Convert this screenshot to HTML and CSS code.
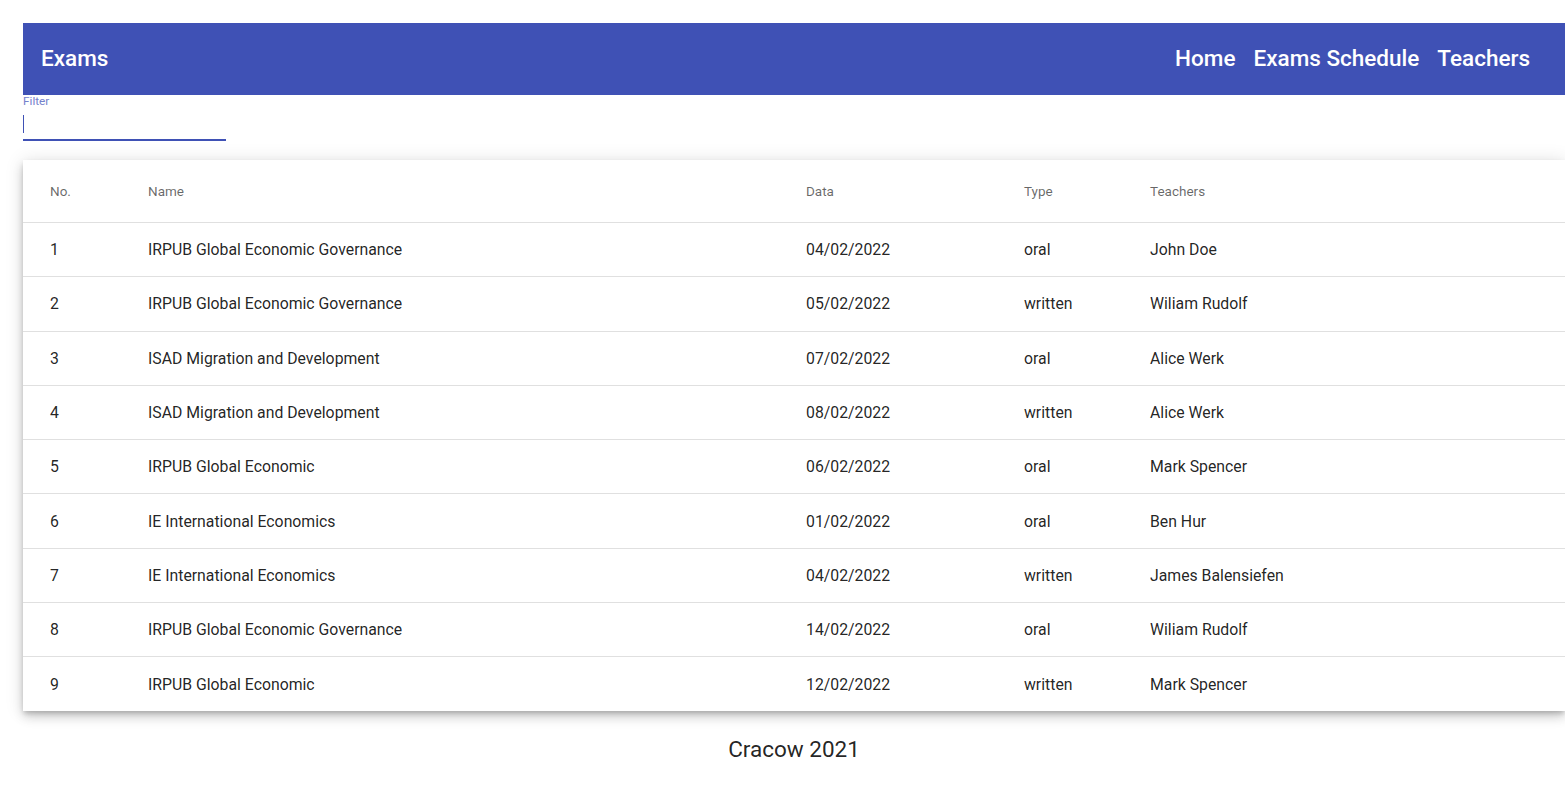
FILE: index.html
```html
<!DOCTYPE html>
<html lang="en">
<head>
<meta charset="utf-8">
<title>Exams</title>
<link rel="stylesheet" href="styles.css">
</head>
<body>
<div class="page">
  <header class="toolbar">
    <span class="title">Exams</span>
    <nav class="nav">
      <a class="nav-link">Home</a>
      <a class="nav-link">Exams Schedule</a>
      <a class="nav-link">Teachers</a>
    </nav>
  </header>
  <div class="filter">
    <label class="filter-label">Filter</label>
    <div class="filter-input"><span class="caret"></span></div>
  </div>
  <div class="card">
    <table class="table">
      <colgroup>
        <col class="c-no"><col class="c-name"><col class="c-data"><col class="c-type"><col class="c-teach">
      </colgroup>
      <thead>
        <tr><th>No.</th><th>Name</th><th>Data</th><th>Type</th><th>Teachers</th></tr>
      </thead>
      <tbody>
        <tr><td>1</td><td>IRPUB Global Economic Governance</td><td>04/02/2022</td><td>oral</td><td>John Doe</td></tr>
        <tr><td>2</td><td>IRPUB Global Economic Governance</td><td>05/02/2022</td><td>written</td><td>Wiliam Rudolf</td></tr>
        <tr><td>3</td><td>ISAD Migration and Development</td><td>07/02/2022</td><td>oral</td><td>Alice Werk</td></tr>
        <tr><td>4</td><td>ISAD Migration and Development</td><td>08/02/2022</td><td>written</td><td>Alice Werk</td></tr>
        <tr><td>5</td><td>IRPUB Global Economic</td><td>06/02/2022</td><td>oral</td><td>Mark Spencer</td></tr>
        <tr><td>6</td><td>IE International Economics</td><td>01/02/2022</td><td>oral</td><td>Ben Hur</td></tr>
        <tr><td>7</td><td>IE International Economics</td><td>04/02/2022</td><td>written</td><td>James Balensiefen</td></tr>
        <tr><td>8</td><td>IRPUB Global Economic Governance</td><td>14/02/2022</td><td>oral</td><td>Wiliam Rudolf</td></tr>
        <tr><td>9</td><td>IRPUB Global Economic</td><td>12/02/2022</td><td>written</td><td>Mark Spencer</td></tr>
      </tbody>
    </table>
  </div>
  <footer class="footer">Cracow 2021</footer>
</div>
</body>
</html>
```

FILE: styles.css
```css
html, body {
  margin: 0;
  padding: 0;
  background: #fff;
  overflow: hidden;
}
body {
  font-family: Roboto, "Helvetica Neue", sans-serif;
  color: rgba(0, 0, 0, 0.87);
}
.page {
  padding: 23px 0 0 23px;
}
.toolbar {
  height: 72px;
  background: #3f51b5;
  color: #fff;
  display: flex;
  align-items: center;
  justify-content: space-between;
  padding: 0 35px 0 18px;
  box-sizing: border-box;
}
.title {
  font-size: 22.5px;
  font-weight: 500;
  line-height: 1;
  margin-top: -2px;
}
.nav {
  display: flex;
  gap: 18px;
  margin-top: -2px;
}
.nav-link {
  font-size: 22.5px;
  font-weight: 500;
  line-height: 1;
  color: #fff;
}
.filter {
  width: 203px;
  display: flex;
  flex-direction: column;
}
.filter-label {
  font-size: 11.8px;
  color: #7582cc;
  line-height: 12px;
}
.filter-input {
  height: 32px;
  border-bottom: 2px solid #3f51b5;
  display: flex;
  align-items: flex-start;
}
.caret {
  width: 1px;
  height: 18px;
  background: #3f51b5;
  margin-top: 8px;
}
.card {
  margin-top: 19px;
  background: #fff;
  box-shadow: 0 3px 5px -1px rgba(0,0,0,.2), 0 6px 10px 0 rgba(0,0,0,.14), 0 1px 18px 0 rgba(0,0,0,.12);
}
.table {
  width: 100%;
  border-collapse: collapse;
  table-layout: fixed;
}
.c-no { width: 125px; }
.c-name { width: 658px; }
.c-data { width: 218px; }
.c-type { width: 126px; }
.table th {
  height: 62px;
  text-align: left;
  font-size: 13.5px;
  font-weight: 400;
  color: rgba(0, 0, 0, 0.6);
  border-bottom: 1px solid #e0e0e0;
  padding: 0;
}
.table td {
  height: 53.3px;
  font-size: 15.8px;
  border-bottom: 1px solid #e0e0e0;
  padding: 0;
  color: rgba(0, 0, 0, 0.87);
}
.table tbody tr:last-child td {
  border-bottom: none;
}
.table th:first-child, .table td:first-child {
  padding-left: 27px;
}
.footer {
  text-align: center;
  font-size: 22.5px;
  padding-top: 25px;
  color: rgba(0, 0, 0, 0.87);
}
```
